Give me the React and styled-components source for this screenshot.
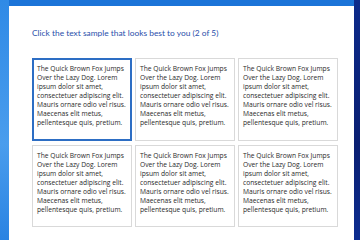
import React from "react";
import styled, { createGlobalStyle } from "styled-components";

const Global = createGlobalStyle`
  html, body { margin: 0; padding: 0; width: 360px; height: 240px; overflow: hidden; background: #1a6fd0; }
  #root { width: 360px; height: 240px; }
`;

const Screen = styled.div`
  display: flex;
  width: 360px;
  height: 240px;
`;

const LeftEdge = styled.div`
  width: 9px;
  background: linear-gradient(180deg, #2f8ae6 0%, #4a9ded 60%, #2a83e2 100%);
`;

const RightEdge = styled.div`
  width: 6px;
  background: linear-gradient(180deg, #0c2a8a 0%, #0a1f72 60%, #0d2d90 100%);
`;

const Window = styled.div`
  flex: 1;
  display: flex;
  flex-direction: column;
  background: #ffffff;
`;

const TitleBar = styled.div`
  height: 6px;
  background: #1b74d8;
`;

const Body = styled.div`
  padding: 20px 0 0 23px;
`;

const Heading = styled.div`
  font-family: Lato, "Open Sans", sans-serif;
  font-weight: 400;
  font-size: 8.4px;
  line-height: 14px;
  color: #2a4fab;
  white-space: nowrap;
  margin-bottom: 18px;
`;

const Grid = styled.div`
  display: grid;
  grid-template-columns: repeat(3, 100px);
  grid-template-rows: 83px 82px;
  column-gap: 3px;
  row-gap: 4px;
`;

const Card = styled.div`
  box-sizing: border-box;
  border: ${(p) => (p.$selected ? "2px solid #2d6ec4" : "1px solid #d9d9d9")};
  padding: ${(p) => (p.$selected ? "4px 3px" : "5px 4px")};
  background: #fff;
`;

const Line = styled.div`
  font-family: "Open Sans", "Noto Sans", sans-serif;
  font-size: 6.7px;
  line-height: 9px;
  color: #2a2a2a;
  white-space: nowrap;
`;

const lines = [
  "The Quick Brown Fox Jumps",
  "Over the Lazy Dog. Lorem",
  "ipsum dolor sit amet,",
  "consectetuer adipiscing elit.",
  "Mauris ornare odio vel risus.",
  "Maecenas elit metus,",
  "pellentesque quis, pretium.",
];

export default function App() {
  return (
    <>
      <Global />
      <Screen>
        <LeftEdge />
        <Window>
          <TitleBar />
          <Body>
            <Heading>Click the text sample that looks best to you (2 of 5)</Heading>
            <Grid>
              {[0, 1, 2, 3, 4, 5].map((i) => (
                <Card key={i} $selected={i === 0}>
                  {lines.map((l) => (
                    <Line key={l}>{l}</Line>
                  ))}
                </Card>
              ))}
            </Grid>
          </Body>
        </Window>
        <RightEdge />
      </Screen>
    </>
  );
}
